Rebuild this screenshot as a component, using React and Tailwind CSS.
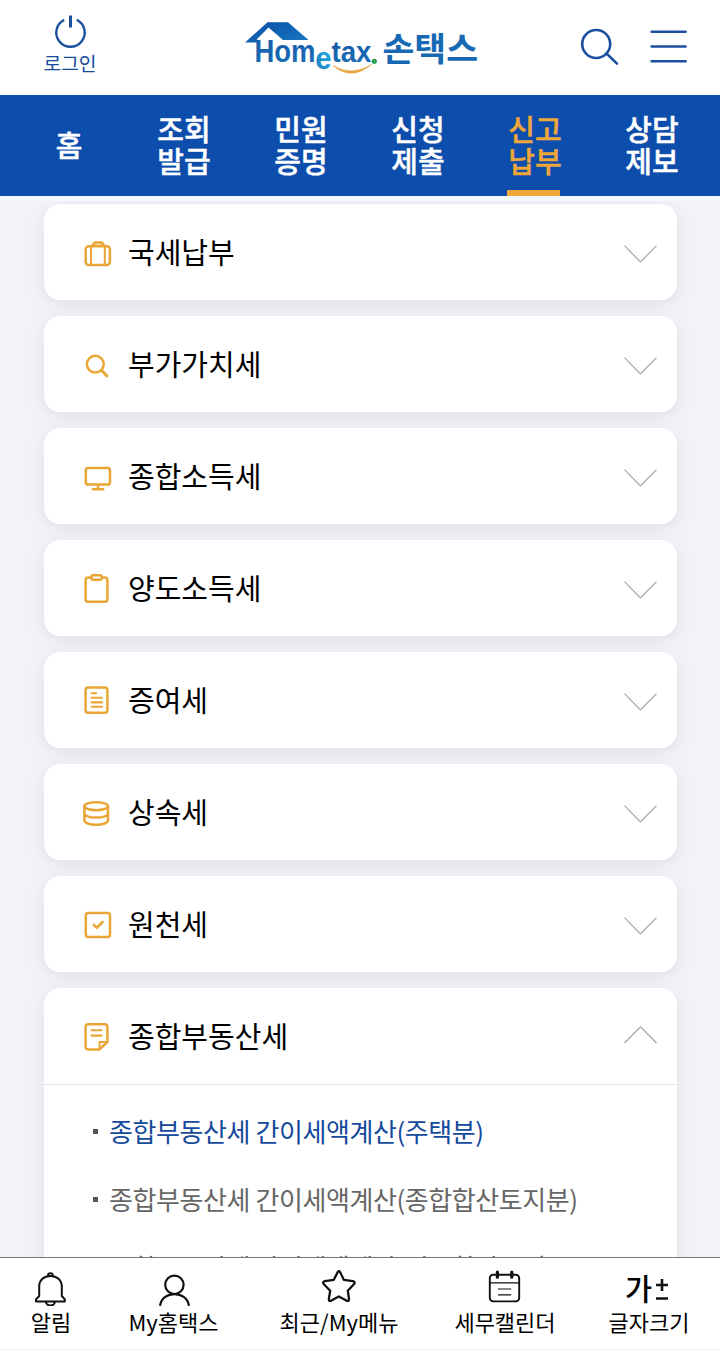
import React from "react";

const KR = "font-['Noto_Sans_CJK_KR','Noto_Sans',sans-serif]";

function MenuIcon({ children }) {
  return (
    <svg width="32" height="32" viewBox="0 0 32 32" fill="none" stroke="#e9a637" strokeWidth="2.5" strokeLinecap="round" strokeLinejoin="round" className="shrink-0">
      {children}
    </svg>
  );
}

const SECTIONS = [
  {
    title: "국세납부",
    icon: (
      <>
        <rect x="3.7" y="9.2" width="24.2" height="18.8" rx="3" />
        <path d="M9 9.2V28M22.8 9.2V28" strokeWidth="2" />
        <path d="M10 8.8L13 5.4H19.6L22.6 8.8Z" />
      </>
    ),
  },
  {
    title: "부가가치세",
    icon: (
      <>
        <circle cx="13.3" cy="15.2" r="8.4" />
        <path d="M19.5 21.3L24.8 26.9" strokeWidth="3" />
      </>
    ),
  },
  {
    title: "종합소득세",
    icon: (
      <>
        <rect x="3.8" y="7" width="24.2" height="16.6" rx="2.4" />
        <path d="M16 24V27.5M10.8 28.2H21.2" />
      </>
    ),
  },
  {
    title: "양도소득세",
    icon: (
      <>
        <rect x="3.6" y="4.6" width="21.8" height="24.2" rx="2.6" />
        <rect x="9.4" y="2.2" width="10.4" height="4.6" rx="2" fill="white" />
      </>
    ),
  },
  {
    title: "증여세",
    icon: (
      <>
        <rect x="3.6" y="2.4" width="21.8" height="25.4" rx="2.6" />
        <path d="M9.6 8.2H14.2M9.6 12.8H20M9.6 17.4H20M9.6 21.8H20" strokeWidth="2.1" />
      </>
    ),
  },
  {
    title: "상속세",
    icon: (
      <>
        <ellipse cx="14.2" cy="9.2" rx="11.8" ry="4" />
        <path d="M2.4 9.2V23.6C2.4 25.8 7.2 27.8 14.2 27.8S26 25.8 26 23.6V9.2M2.4 16.4C2.4 18.6 7.2 20.6 14.2 20.6S26 18.6 26 16.4" />
      </>
    ),
  },
  {
    title: "원천세",
    icon: (
      <>
        <rect x="3.8" y="4" width="24.2" height="24" rx="2.4" />
        <path d="M11.8 15.8L14.8 18.8L20.6 13" />
      </>
    ),
  },
  {
    title: "종합부동산세",
    open: true,
    icon: (
      <>
        <path d="M6.2 3.2H22.8Q25.4 3.2 25.4 5.8V21L17.6 28.4H6.2Q3.6 28.4 3.6 25.8V5.8Q3.6 3.2 6.2 3.2Z" />
        <path d="M25 21H17.6V27.8" strokeWidth="2" />
        <path d="M9.6 9.2H19.6M9.6 14.6H19.6" strokeWidth="2.1" />
      </>
    ),
    items: ["종합부동산세 간이세액계산(주택분)", "종합부동산세 간이세액계산(종합합산토지분)", "종합부동산세 간이세액계산(별도합산토지분)"],
  },
];

const TABS = [["홈"], ["조회", "발급"], ["민원", "증명"], ["신청", "제출"], ["신고", "납부"], ["상담", "제보"]];

function Logo() {
  return (
    <svg width="240" height="64" viewBox="0 0 240 64" className="block">
      <defs>
        <linearGradient id="roof" x1="0" y1="0" x2="1" y2="1">
          <stop offset="0" stopColor="#0b4da2" />
          <stop offset="1" stopColor="#1878c4" />
        </linearGradient>
        <linearGradient id="word" x1="0" y1="0" x2="0" y2="1">
          <stop offset="0" stopColor="#1558a6" />
          <stop offset="1" stopColor="#1a70b8" />
        </linearGradient>
        <linearGradient id="e" x1="0" y1="1" x2="1" y2="0">
          <stop offset="0" stopColor="#1a78c0" />
          <stop offset="1" stopColor="#24b4e4" />
        </linearGradient>
      </defs>
      <path d="M5 25.5L27.5 5.2H48L68.5 23H43L28.5 10.5L17 22V25.5Z" fill="url(#roof)" />
      <g fill="url(#word)" fontFamily="Liberation Sans, sans-serif" fontWeight="700">
        <text x="14.5" y="45.2" fontSize="30.5" textLength="61" lengthAdjust="spacingAndGlyphs">Hom</text>
        <text x="91.5" y="45.2" fontSize="30" textLength="40" lengthAdjust="spacingAndGlyphs">tax</text>
      </g>
      <text x="75.2" y="51.8" fontSize="31" fontFamily="Liberation Sans, sans-serif" fontWeight="700" fill="url(#e)" textLength="16.3" lengthAdjust="spacingAndGlyphs">e</text>
      <path d="M93 48.5Q111 64.5 131.5 47.5Q112 60 93 48.5Z" fill="#e8a33c" stroke="#e8a33c" strokeWidth="0.6" />
      <circle cx="134.3" cy="44.3" r="2.6" fill="#2aa04a" />
      <text x="142.5" y="43.6" fontSize="33.5" fontFamily="Noto Sans CJK KR, sans-serif" fontWeight="700" fill="#1769b3" textLength="95.5" lengthAdjust="spacingAndGlyphs">손택스</text>
    </svg>
  );
}

function Header() {
  return (
    <header className="flex h-[95px] shrink-0 items-start bg-white text-[#154a9c]">
      <div className="flex w-[140px] flex-col items-center pt-[14px]">
        <svg width="36" height="36" viewBox="0 0 36 36" fill="none" stroke="#1c509f" strokeWidth="2.4">
          <path d="M12.2 5.8A14.2 14.2 0 1 0 24.8 5.8" />
          <path d="M18.5 1.5V13.5" strokeWidth="3" />
        </svg>
        <span className="mt-px text-[19.3px] leading-6">로그인</span>
      </div>
      <div className="ml-[100px] pt-[17px]"><Logo /></div>
      <svg width="40" height="40" viewBox="0 0 40 40" fill="none" stroke="#1c4f9f" strokeWidth="2.6" strokeLinecap="round" className="ml-[100px] mt-[27px]">
        <circle cx="16.2" cy="17" r="14" />
        <path d="M26.5 26.5L37 36.6" />
      </svg>
      <svg width="40" height="40" viewBox="0 0 40 40" stroke="#1c4f9f" strokeWidth="2.6" strokeLinecap="round" className="ml-[29px] mt-[27px]">
        <path d="M2.6 4.7H36.6M2.6 19.5H36.6M2.6 34.3H36.6" />
      </svg>
    </header>
  );
}

function Chevron({ up }) {
  return (
    <svg width="33" height="18" viewBox="0 0 33 18" fill="none" stroke="#a2a2a2" strokeWidth="1.1" className={up ? "mb-[2px]" : "mt-[4px]"}>
      <path d={up ? "M0.5 17L16.5 0.8L32.5 17" : "M0.5 0.7L16.5 17L32.5 0.7"} />
    </svg>
  );
}

function Section({ s }) {
  return (
    <section className={`shrink-0 bg-white shadow-[0_4px_16px_rgba(66,68,70,0.1)] ${s.open ? "rounded-t-2xl" : "rounded-2xl"}`}>
      <div className={`flex items-center pl-[38px] pr-5 ${s.open ? "h-[97px] border-b border-[#e6e6e8]" : "h-24"}`}>
        <div className="pt-[2px]"><MenuIcon>{s.icon}</MenuIcon></div>
        <h2 className="-mt-[2px] ml-[14px] flex-1 text-[29px] leading-[44px] text-black">{s.title}</h2>
        <Chevron up={s.open} />
      </div>
      {s.items && (
        <ul className="pt-3">
          {s.items.map((t, i) => (
            <li key={t} className={`flex h-[68px] items-center whitespace-nowrap pl-[49px] text-[26px] leading-[36px] tracking-[-0.42px] ${i === 0 ? "text-[#154a9c]" : "text-[#666]"}`}>
              <span className="mr-[11px] size-[5px] bg-[#555]" />
              {t}
            </li>
          ))}
        </ul>
      )}
    </section>
  );
}

const BottomSvg = ({ children }) => (
  <svg width="36" height="36" viewBox="0 0 36 36" fill="none" stroke="#111" strokeWidth="2" strokeLinecap="round" strokeLinejoin="round">
    {children}
  </svg>
);

const BOTTOM = [
  {
    label: "알림",
    width: "w-[102px]",
    icon: (
      <BottomSvg>
        <path d="M3 31.6V29.4L6.2 26V16.4C6.2 10 11 6 17.4 6S28.8 10 28.8 16.4V26L31.8 29.4V31.6Z" />
        <path d="M15 5.6A2.4 2.4 0 0 1 19.8 5.6M13 32A4.4 3.4 0 0 0 21.8 32" />
      </BottomSvg>
    ),
  },
  {
    label: "My홈택스",
    width: "w-[143px]",
    icon: (
      <BottomSvg>
        <circle cx="18.4" cy="14.8" r="9.2" strokeWidth="2.2" />
        <path d="M4.2 35C5.5 28 11.5 24.2 18.4 24.2S31.5 28 32.8 35" strokeWidth="2.2" />
      </BottomSvg>
    ),
  },
  {
    label: "최근/My메뉴",
    width: "w-[188px]",
    icon: (
      <BottomSvg>
        <path d="M16.5 2.4Q18 -0.2 19.3 2.4L22.8 9.8L31.8 11.2Q34.8 12 32.8 14.3L26.8 20.8L28 28.8Q28.2 31.8 25.4 30.6L17.8 26.5L10.4 30.6Q7.6 31.8 7.9 28.8L9.2 20.8L2.9 14.3Q1 12 3.9 11.2L12.8 9.8Z" strokeWidth="2.3" />
      </BottomSvg>
    ),
  },
  {
    label: "세무캘린더",
    width: "w-[144px]",
    icon: (
      <BottomSvg>
        <rect x="2.8" y="4.8" width="29.4" height="26.6" rx="3.4" strokeWidth="1.9" />
        <path d="M2.8 12.8H32.2M11.4 19H23.8M11.4 24.8H23.8" strokeWidth="1.2" />
        <path d="M10.4 2V7.2M24.8 2V7.2" strokeWidth="3.2" />
      </BottomSvg>
    ),
  },
  {
    label: "글자크기",
    width: "w-[144px]",
    icon: (
      <div className="flex h-9 w-[48px] items-start">
        <span className="text-[29.5px] font-medium leading-[35px]">가</span>
        <svg width="14" height="24" viewBox="0 0 14 24" stroke="#111" strokeWidth="2.6" className="ml-[3px] mt-[7px] shrink-0">
          <path d="M1 8H13M7 2V14M1 21.5H13" />
        </svg>
      </div>
    ),
  },
];

export default function App() {
  return (
    <div className={`flex h-[1350px] w-[720px] flex-col overflow-hidden bg-[#f1f3f9] ${KR}`}>
      <Header />
      <nav className="grid h-[101px] shrink-0 grid-cols-6 bg-[#0d4dac] pl-2 pr-[10px]">
        {TABS.map((lines) => {
          const active = lines[0] === "신고";
          const single = lines.length === 1;
          return (
            <div key={lines[0]} className={`flex h-full flex-col items-center text-[29px] font-medium leading-8 [-webkit-text-stroke:0.45px_currentColor] ${active ? "text-[#eda63a]" : "text-white"} ${single ? "pl-[5px]" : "pl-px"}`}>
              <div className="flex flex-1 items-center pb-[3px] text-center">
                <span>
                  {lines[0]}
                  {!single && <br />}
                  {lines[1]}
                </span>
              </div>
              <div className={`-mt-[6px] mr-[3px] h-[6px] w-[53px] ${active ? "bg-[#eda63a]" : ""}`} />
            </div>
          );
        })}
      </nav>
      <div className="h-[5px] shrink-0 bg-[#f3f8fe]" />
      <main className="flex min-h-0 flex-1 flex-col gap-4 overflow-hidden pl-11 pr-[43px] pt-[3px]">
        {SECTIONS.map((s) => <Section key={s.title} s={s} />)}
      </main>
      <footer className="flex h-[93px] shrink-0 border-b border-t border-b-[#eee] border-t-[#777] bg-white">
        {BOTTOM.map((b) => (
          <div key={b.label} className={`flex shrink-0 flex-col items-center pt-[12px] text-black ${b.width}`}>
            {b.icon}
            <span className="-mt-px whitespace-nowrap text-[22px] leading-8">{b.label}</span>
          </div>
        ))}
      </footer>
    </div>
  );
}
